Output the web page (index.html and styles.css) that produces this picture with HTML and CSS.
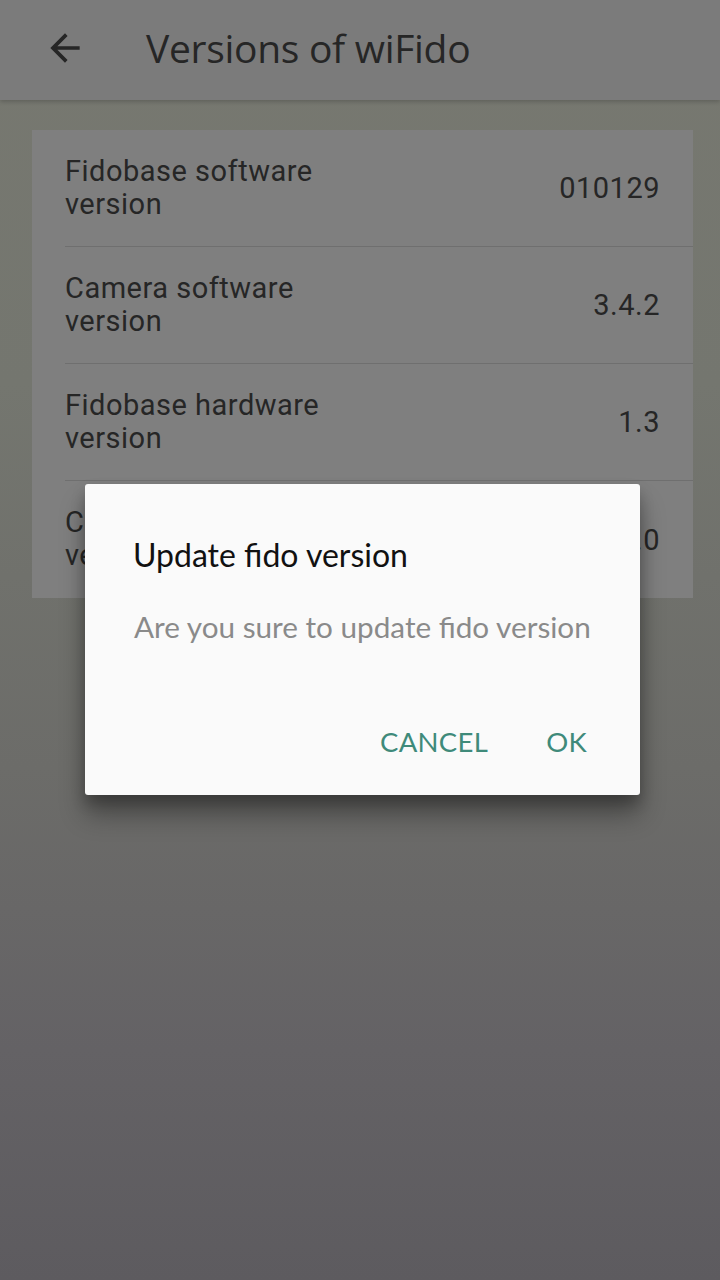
FILE: index.html
```html
<!DOCTYPE html>
<html>
<head>
<meta charset="utf-8">
<link rel="stylesheet" href="styles.css">
</head>
<body>
<div class="screen">
  <header class="appbar">
    <svg class="back" viewBox="0 0 24 24" width="44" height="44"><path d="M20 11H7.83l5.59-5.59L12 4l-8 8 8 8 1.41-1.41L7.83 13H20v-2z" fill="#262626"/></svg>
    <h1 class="title">Versions of wiFido</h1>
  </header>
  <main class="content">
    <section class="card">
      <div class="row">
        <div class="label">Fidobase software<br>version</div>
        <div class="value">010129</div>
      </div>
      <div class="row">
        <div class="label">Camera software<br>version</div>
        <div class="value">3.4.2</div>
      </div>
      <div class="row">
        <div class="label">Fidobase hardware<br>version</div>
        <div class="value">1.3</div>
      </div>
      <div class="row">
        <div class="label">Camera hardware<br>version</div>
        <div class="value">1.0</div>
      </div>
    </section>
  </main>
  <div class="scrim">
    <div class="dialog">
      <h2 class="dlg-title">Update fido version</h2>
      <p class="dlg-msg">Are you sure to update fido version</p>
      <div class="dlg-actions">
        <button class="btn">CANCEL</button>
        <button class="btn">OK</button>
      </div>
    </div>
  </div>
</div>
</body>
</html>
```
FILE: styles.css
```css
html, body {
  margin: 0;
  padding: 0;
  width: 720px;
  height: 1280px;
  overflow: hidden;
}
.screen {
  width: 720px;
  height: 1280px;
  background: linear-gradient(180deg, #777870 0%, #74766f 30%, #6c6c69 60%, #646265 82%, #5d5b5f 100%);
  font-family: Roboto, "Liberation Sans", sans-serif;
  position: relative;
}
.appbar {
  height: 100px;
  background: #7b7b7b;
  display: flex;
  align-items: center;
  box-shadow: 0 2px 4px rgba(0,0,0,0.18);
  position: relative;
  z-index: 1;
}
.back {
  margin-left: 43px;
  margin-top: -5px;
}
.title {
  margin: -5px 0 0 59px;
  font-family: "Open Sans", "Noto Sans", sans-serif;
  font-weight: 400;
  font-size: 39px;
  color: #262626;
  letter-spacing: -0.3px;
}
.content {
  padding: 30px 27px 0 32px;
}
.card {
  background: #7f7f7f;
  display: flex;
  flex-direction: column;
}
.row {
  height: 117px;
  margin-left: 33px;
  padding-right: 33px;
  display: flex;
  align-items: center;
  justify-content: space-between;
  border-bottom: 1px solid #6f6f6f;
  box-sizing: border-box;
}
.row:last-child {
  border-bottom: none;
}
.label {
  font-size: 29px;
  line-height: 33px;
  color: #262626;
  letter-spacing: 0.5px;
  margin-top: -1px;
}
.value {
  font-size: 29px;
  color: #262626;
  letter-spacing: 0.5px;
}
.scrim {
  position: absolute;
  inset: 0;
  display: flex;
  align-items: center;
  justify-content: center;
  z-index: 2;
}
.dialog {
  width: 555px;
  height: 311px;
  margin-left: 5px;
  margin-top: -2px;
  background: #fafafa;
  border-radius: 3px;
  box-shadow: 0 20px 26px rgba(0,0,0,0.32), 0 8px 14px rgba(0,0,0,0.22);
  box-sizing: border-box;
  padding: 47px 53px 0 48px;
  font-family: Lato, "Open Sans", sans-serif;
  display: flex;
  flex-direction: column;
}
.dlg-title {
  margin: 0;
  font-weight: 400;
  font-size: 32px;
  line-height: 48px;
  color: #111;
}
.dlg-msg {
  margin: 29px 0 0 1px;
  font-size: 29.7px;
  line-height: 38px;
  color: #8a8a8a;
  white-space: nowrap;
}
.dlg-actions {
  display: flex;
  justify-content: flex-end;
  gap: 58px;
  margin-top: 80px;
}
.btn {
  background: none;
  border: none;
  padding: 0;
  font-family: Lato, "Open Sans", sans-serif;
  font-size: 27.5px;
  line-height: 32px;
  color: #3f8a7a;
  letter-spacing: 0.3px;
}
```
